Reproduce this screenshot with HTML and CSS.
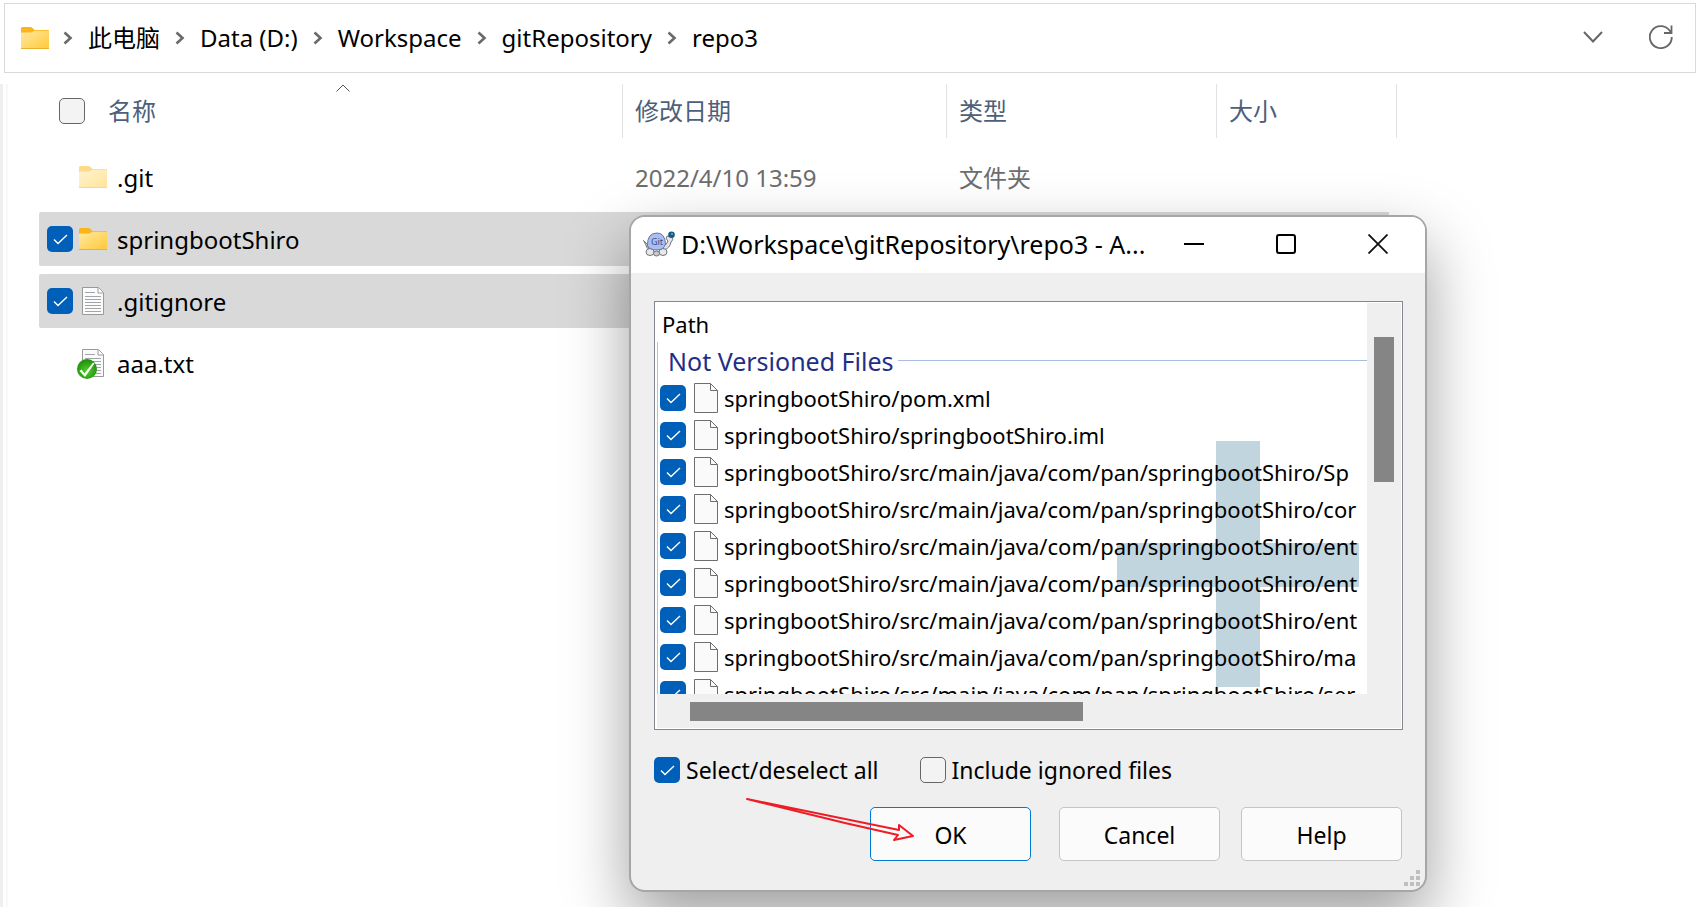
FILE: index.html
```html
<!DOCTYPE html>
<html lang="zh-CN">
<head>
    <meta charset="UTF-8">
    <meta name="viewport" content="width=device-width, initial-scale=1.0">
    <title>repo3</title>
    <link rel="stylesheet" href="styles.css">
</head>
<body>
    <!-- Shared icons -->
    <svg class="symbols" aria-hidden="true">
        <defs>
            <linearGradient id="folderFill" x1="0" y1="0" x2="1" y2="1">
                <stop offset="0" stop-color="#ffe9a2"/>
                <stop offset="1" stop-color="#ffc937"/>
            </linearGradient>
            <radialGradient id="okFill" cx="0.5" cy="0.6" r="0.6">
                <stop offset="0" stop-color="#4fd02a"/>
                <stop offset="1" stop-color="#1d8c0c"/>
            </radialGradient>
        </defs>
        <symbol id="folder" viewBox="0 0 28 22">
            <path d="M0 8V1.500Q0 0 1.500 0H9Q10.500 0 11.500 1L13.500 3H27Q28 3 28 4V8z" fill="#fbb41a"/>
            <path d="M0 6.500Q0 5.500 1 5.500H9.500Q11 5.500 12 4.600T14 3.700H27.300Q28 3.700 28 4.500V21Q28 22 27 22H1Q0 22 0 21z" fill="url(#folderFill)"/>
            <path d="M0 21.500H28" stroke="#eab02f"/>
        </symbol>
        <symbol id="text" viewBox="0 0 22 28">
            <path d="M.5.500H16.500L21.500 5.500V27.500H.5z" fill="#fbfbfb" stroke="#999"/>
            <path d="M16 .5V6H21.500" fill="#fff" stroke="#999"/>
            <path d="M3 5.500H13M3 9.500H19M3 12.500H19M3 15.500H19M3 18.500H19M3 21.500H19M3 24.500H19" stroke="#a2a5aa"/>
        </symbol>
        <symbol id="blank" viewBox="0 0 24 30">
            <path d="M.5.500H16.500L23.500 7.500V29.500H.5z" fill="#fafafa" stroke="#6e6e6e"/>
            <path d="M16.500.500V7.500H23.500" fill="none" stroke="#6e6e6e"/>
        </symbol>
        <symbol id="sep" viewBox="0 0 10 14">
            <path d="M1.500 1.500L7.500 7L1.500 12.500" fill="none" stroke="#6a6a6a" stroke-width="2.600"/>
        </symbol>
    </svg>

    <header class="address-bar">
        <svg class="icon-folder"><use href="#folder"/></svg>
        <nav class="breadcrumb">
            <svg class="sep"><use href="#sep"/></svg>
            <a href="#">此电脑</a>
            <svg class="sep"><use href="#sep"/></svg>
            <a href="#">Data (D:)</a>
            <svg class="sep"><use href="#sep"/></svg>
            <a href="#">Workspace</a>
            <svg class="sep"><use href="#sep"/></svg>
            <a href="#">gitRepository</a>
            <svg class="sep"><use href="#sep"/></svg>
            <a href="#">repo3</a>
        </nav>
        <div class="address-actions">
            <button type="button" aria-label="历史记录">
                <svg width="20" height="24" viewBox="0 0 20 24"><path d="M1 7L10 16.500L19 7" fill="none" stroke="#666" stroke-width="2"/></svg>
            </button>
            <button type="button" aria-label="刷新">
                <svg width="24" height="24" viewBox="0 0 24 24"><path d="M22.800 12A11 11 0 1 1 20.600 5.500L22.500 8M22.500 .5V8H15" fill="none" stroke="#666" stroke-width="1.800"/></svg>
            </button>
        </div>
    </header>

    <main class="file-pane">
        <table class="file-table">
            <thead>
                <tr>
                    <th class="col-name">
                        <div class="head-cell">
                            <input type="checkbox" class="check" aria-label="全选">
                            <span>名称</span>
                            <svg class="sort" viewBox="0 0 14 8"><path d="M.5 7.500L7 1L13.500 7.500" fill="none" stroke="#555"/></svg>
                        </div>
                    </th>
                    <th class="col-date"><div class="head-cell">修改日期</div></th>
                    <th class="col-type"><div class="head-cell">类型</div></th>
                    <th class="col-size"><div class="head-cell">大小</div></th>
                </tr>
            </thead>
            <tbody>
                <tr>
                    <td><div class="name-cell"><span class="check-slot"></span><span class="file-icon"><svg class="icon-folder faded"><use href="#folder"/></svg></span><span class="file-name">.git</span></div></td>
                    <td><span class="file-name">2022/4/10 13:59</span></td>
                    <td><span class="file-name">文件夹</span></td>
                    <td></td>
                </tr>
                <tr class="selected">
                    <td><div class="name-cell"><input type="checkbox" class="check" id="row1" checked><span class="file-icon"><svg class="icon-folder"><use href="#folder"/></svg></span><label class="file-name" for="row1">springbootShiro</label></div></td>
                    <td></td>
                    <td></td>
                    <td></td>
                </tr>
                <tr class="selected">
                    <td><div class="name-cell"><input type="checkbox" class="check" id="row2" checked><span class="file-icon"><svg class="icon-text"><use href="#text"/></svg></span><label class="file-name" for="row2">.gitignore</label></div></td>
                    <td></td>
                    <td></td>
                    <td></td>
                </tr>
                <tr>
                    <td>
                        <div class="name-cell"><span class="check-slot"></span><span class="file-icon"><svg class="icon-text"><use href="#text"/></svg><svg class="badge" viewBox="0 0 20 20"><circle cx="10" cy="10" r="10" fill="url(#okFill)"/><path d="M2.500 12L4.500 10.500L7.500 14.500L16 3.500L17.500 4.500L8 18z" fill="#fff"/></svg></span><span class="file-name">aaa.txt</span></div>
                    </td>
                    <td></td>
                    <td></td>
                    <td></td>
                </tr>
            </tbody>
        </table>
    </main>

    <section class="dialog" role="dialog" aria-labelledby="dialogTitle">
        <div class="title-bar">
            <svg class="turtle" viewBox="0 0 32 26">
                <path d="M20 15Q24 14 25 10Q22 8 24 5L29 6Q31 9 28 11Q27 17 21 19z" fill="#e6e6ea" stroke="#70737c"/>
                <path d="M5 14L.5 9.500L3 14Q3 17 6 18z" fill="#ddd" stroke="#70737c"/>
                <ellipse cx="7" cy="21" rx="4" ry="3.500" fill="#e8e8ea" stroke="#70737c"/>
                <ellipse cx="20" cy="21" rx="4" ry="3.500" fill="#e8e8ea" stroke="#70737c"/>
                <ellipse cx="13.500" cy="22.500" rx="3" ry="2.500" fill="#c9c9ce" stroke="#70737c"/>
                <path d="M4.500 15Q4 2 14 2Q22 2 22.500 13Q21 19 14 19Q7 19 4.500 15z" fill="#a9bff0" stroke="#66749f"/>
                <text x="8" y="14" class="turtle-text">Git</text>
                <circle cx="28.500" cy="3.800" r="3.300" fill="#155a80"/>
                <circle cx="29" cy="3" r="1" fill="#58b7d8"/>
            </svg>
            <h1 id="dialogTitle">D:\Workspace\gitRepository\repo3 - A...</h1>
            <div class="window-buttons">
                <button type="button" aria-label="Minimize"><svg viewBox="0 0 20 20"><path d="M0 10H20" stroke="#000" stroke-width="2"/></svg></button>
                <button type="button" aria-label="Maximize"><svg viewBox="0 0 20 20"><rect x="1" y="1" width="18" height="18" rx="2" fill="none" stroke="#000" stroke-width="2"/></svg></button>
                <button type="button" aria-label="Close"><svg viewBox="0 0 20 20"><path d="M.5.500L19.500 19.500M19.500.500L.5 19.500" stroke="#111" stroke-width="1.800"/></svg></button>
            </div>
        </div>

        <div class="dialog-body">
            <div class="path-list">
                <div class="path-view">
                    <svg class="plus" viewBox="0 0 242 246"><path d="M99 0H143V102H242V146H143V246H99V146H0V102H99z" fill="#c1d5df"/></svg>
                    <div class="path-head">Path</div>
                    <div class="path-group">
                        <h2>Not Versioned Files</h2>
                        <ul>
                            <li><label><input type="checkbox" class="check" checked><svg class="icon-blank"><use href="#blank"/></svg>springbootShiro/pom.xml</label></li>
                            <li><label><input type="checkbox" class="check" checked><svg class="icon-blank"><use href="#blank"/></svg>springbootShiro/springbootShiro.iml</label></li>
                            <li><label><input type="checkbox" class="check" checked><svg class="icon-blank"><use href="#blank"/></svg>springbootShiro/src/main/java/com/pan/springbootShiro/Sp</label></li>
                            <li><label><input type="checkbox" class="check" checked><svg class="icon-blank"><use href="#blank"/></svg>springbootShiro/src/main/java/com/pan/springbootShiro/cor</label></li>
                            <li><label><input type="checkbox" class="check" checked><svg class="icon-blank"><use href="#blank"/></svg>springbootShiro/src/main/java/com/pan/springbootShiro/ent</label></li>
                            <li><label><input type="checkbox" class="check" checked><svg class="icon-blank"><use href="#blank"/></svg>springbootShiro/src/main/java/com/pan/springbootShiro/ent</label></li>
                            <li><label><input type="checkbox" class="check" checked><svg class="icon-blank"><use href="#blank"/></svg>springbootShiro/src/main/java/com/pan/springbootShiro/ent</label></li>
                            <li><label><input type="checkbox" class="check" checked><svg class="icon-blank"><use href="#blank"/></svg>springbootShiro/src/main/java/com/pan/springbootShiro/ma</label></li>
                            <li><label><input type="checkbox" class="check" checked><svg class="icon-blank"><use href="#blank"/></svg>springbootShiro/src/main/java/com/pan/springbootShiro/ser</label></li>
                        </ul>
                    </div>
                </div>
                <div class="scroll-y"><div class="thumb"></div></div>
                <div class="scroll-x"><div class="thumb"></div></div>
            </div>

            <div class="options">
                <label><input type="checkbox" class="check" checked>Select/deselect all</label>
                <label><input type="checkbox" class="check">Include ignored files</label>
            </div>

            <div class="actions">
                <button type="button" class="btn btn-ok">OK</button>
                <button type="button" class="btn">Cancel</button>
                <button type="button" class="btn">Help</button>
                <svg class="arrow" viewBox="0 0 172 46"><path d="M2 2L154 33V28L168 39L149 43L153 38L100 26L2 2z" fill="none" stroke="#ee1c25" stroke-width="2" stroke-linejoin="round"/></svg>
            </div>
        </div>
        <svg class="grip" viewBox="0 0 16 16"><path d="M12 0h4v4h-4zM6 6h4v4h-4zM12 6h4v4h-4zM0 12h4v4h-4zM6 12h4v4h-4zM12 12h4v4h-4z" fill="#bfbfbf"/></svg>
    </section>
</body>
</html>
```
FILE: styles.css
```css
* {
    margin: 0;
    padding: 0;
    box-sizing: border-box;
}

body {
    position: relative;
    min-height: 100vh;
    display: flex;
    flex-direction: column;
    gap: 11px;
    padding-top: 3px;
    overflow: hidden;
    background: #fff;
    color: #000;
    font-family: "Segoe UI", "Noto Sans", "Noto Sans CJK SC", sans-serif;
    font-size: 24px;
    line-height: 32px;
}

button {
    font: inherit;
    color: inherit;
    border: none;
    background: none;
    cursor: pointer;
}

svg {
    display: block;
    flex-shrink: 0;
}

.symbols {
    position: absolute;
    width: 0;
    height: 0;
}

/* Check boxes */
.check {
    appearance: none;
    flex-shrink: 0;
    width: 26px;
    height: 26px;
    border: 1px solid #666;
    border-radius: 5px;
    background: #f3f3f3;
}

.check:checked {
    border: none;
    background: #005fb8 url("data:image/svg+xml,%3Csvg xmlns='http://www.w3.org/2000/svg' viewBox='0 0 26 26'%3E%3Cpath d='M7 13.500L11 17.500L20 9' fill='none' stroke='white' stroke-width='1.400'/%3E%3C/svg%3E");
}

/* File icons */
.icon-folder {
    width: 28px;
    height: 22px;
}

.icon-folder.faded {
    opacity: 0.5;
}

.icon-text {
    width: 22px;
    height: 28px;
}

.icon-blank {
    width: 24px;
    height: 30px;
}

/* Address bar */
.address-bar {
    display: flex;
    align-items: center;
    height: 70px;
    margin: 0 4px;
    padding: 0 22px 0 16px;
    border: 1px solid #d9d9d9;
}

.breadcrumb {
    display: flex;
    align-items: center;
    gap: 15px;
    margin-left: 14px;
}

.breadcrumb a {
    color: #000;
    text-decoration: none;
}

.sep {
    width: 10px;
    height: 14px;
}

.address-actions {
    display: flex;
    gap: 46px;
    margin-left: auto;
    padding-bottom: 2px;
}

/* File list */
.file-pane {
    flex: 1;
    padding-left: 31px;
    border-left: 3px solid #efefef;
    box-shadow: inset 3px 0 #fff, inset 5px 0 #f8f8f8;
}

.file-table {
    width: 1358px;
    margin-left: 5px;
    margin-top: -8px;
    table-layout: fixed;
    border-spacing: 0 8px;
    text-align: left;
}

.col-name {
    width: 584px;
}

.col-date {
    width: 324px;
}

.col-type {
    width: 270px;
}

.file-table th {
    height: 58px;
    vertical-align: top;
    font-weight: normal;
    color: #4c607a;
}

.head-cell {
    position: relative;
    display: flex;
    align-items: center;
    gap: 23px;
    height: 54px;
    padding-left: 12px;
    border-right: 1px solid #e2e2e2;
}

.col-name .head-cell {
    padding-left: 20px;
}

.sort {
    position: absolute;
    top: 0;
    left: 51%;
    width: 14px;
    height: 8px;
}

.file-table td {
    height: 54px;
    padding-left: 12px;
    color: #6d6d6d;
}

.file-table td:first-child {
    padding-left: 8px;
    color: #000;
}

.file-table td:last-child {
    border-right: 8px solid transparent;
    background-clip: padding-box;
}

.selected td {
    background-color: #d9d9d9;
}

.selected td:first-child {
    border-radius: 2px 0 0 2px;
}

.name-cell {
    display: flex;
    align-items: center;
}

.check-slot {
    width: 26px;
}

.file-name {
    display: block;
    padding-top: 2px;
}

.file-icon {
    position: relative;
    display: flex;
    justify-content: center;
    width: 28px;
    margin: 0 10px 0 6px;
}

.badge {
    position: absolute;
    left: -2px;
    bottom: -2px;
    width: 20px;
    height: 20px;
}

/* Dialog window */
.dialog {
    position: absolute;
    top: 215px;
    left: 629px;
    width: 798px;
    border: 2px solid #a6a6a6;
    border-radius: 16px;
    background: #efefef;
    background-clip: padding-box;
    box-shadow: 0 28px 64px rgba(0, 0, 0, 0.38);
}

.title-bar {
    display: flex;
    align-items: center;
    height: 56px;
    padding: 0 37px 2px 12px;
    border-radius: 14px 14px 0 0;
    background: #fff;
}

.title-bar h1 {
    margin-left: 6px;
    font-size: 25px;
    font-weight: normal;
    white-space: nowrap;
}

.turtle {
    width: 32px;
    height: 26px;
}

.turtle-text {
    font-size: 9px;
    fill: #3d4c82;
}

.window-buttons {
    display: flex;
    gap: 72px;
    margin-left: auto;
}

.window-buttons svg {
    width: 20px;
    height: 20px;
}

.dialog-body {
    padding: 28px 22px 29px 23px;
}

.path-list {
    display: grid;
    grid-template-columns: 1fr 34px;
    grid-template-rows: 391px 34px;
    height: 429px;
    padding: 1px 1px 1px 2px;
    border: 1px solid #828790;
    background: #fff;
}

.path-view {
    position: relative;
    overflow: hidden;
}

.plus {
    position: absolute;
    right: 8px;
    bottom: 7px;
    width: 242px;
    height: 246px;
}

.path-head {
    height: 39px;
    padding: 5px 0 0 5px;
    font-size: 22px;
}

.path-group {
    position: relative;
    border-left: 1px solid #99c9ef;
}

.path-group h2 {
    display: flex;
    align-items: center;
    gap: 4px;
    height: 37px;
    padding-left: 10px;
    font-size: 25px;
    font-weight: normal;
    color: #1f2f87;
}

.path-group h2::after {
    content: "";
    flex: 1;
    height: 1px;
    background: #a9bde0;
}

.path-group ul {
    list-style: none;
}

.path-group label {
    display: flex;
    align-items: center;
    height: 37px;
    padding-left: 2px;
    font-size: 22px;
    line-height: 30px;
    white-space: nowrap;
}

.icon-blank {
    margin: 0 6px 0 8px;
}

.scroll-y,
.scroll-x {
    background: #efefef;
}

.scroll-y {
    padding: 34px 7px 0;
}

.scroll-y .thumb {
    height: 145px;
}

.scroll-x {
    grid-column: 1 / -1;
    padding: 8px 33px;
}

.scroll-x .thumb {
    width: 393px;
    height: 19px;
}

.thumb {
    background: #858585;
}

.options {
    display: flex;
    gap: 41px;
    margin-top: 24px;
}

.options label {
    display: flex;
    align-items: center;
    gap: 6px;
    font-size: 23px;
}

.actions {
    position: relative;
    display: flex;
    justify-content: flex-end;
    gap: 21px;
    margin-top: 21px;
    padding-right: 1px;
}

.btn {
    width: 161px;
    height: 54px;
    padding-top: 2px;
    border: 1px solid #c4c4c4;
    border-radius: 5px;
    background: #fbfbfb;
    font-size: 23px;
}

.btn-ok {
    margin-right: 7px;
    border-color: #0078d4;
}

/* Pointer drawn over the OK button */
.arrow {
    position: absolute;
    top: -10px;
    left: 91px;
    width: 172px;
    height: 46px;
}

.grip {
    position: absolute;
    right: 5px;
    bottom: 4px;
    width: 16px;
    height: 16px;
}
```
